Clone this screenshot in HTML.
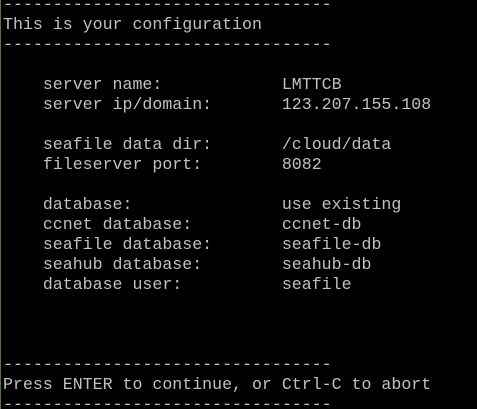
<!DOCTYPE html>
<html><head><meta charset="utf-8"><style>
html,body{margin:0;padding:0;background:#000;width:477px;height:409px;overflow:hidden}
body{border-left:1px solid #4f7a3a;box-sizing:border-box;position:relative}
pre{position:absolute;left:2px;top:-5px;margin:0;font-family:"Liberation Mono",monospace;font-size:16.6px;line-height:20px;color:#c0c0c0;white-space:pre}
</style></head><body><pre>---------------------------------
This is your configuration
---------------------------------

    server name:            LMTTCB
    server ip/domain:       123.207.155.108

    seafile data dir:       /cloud/data
    fileserver port:        8082

    database:               use existing
    ccnet database:         ccnet-db
    seafile database:       seafile-db
    seahub database:        seahub-db
    database user:          seafile



---------------------------------
Press ENTER to continue, or Ctrl-C to abort
---------------------------------</pre></body></html>
